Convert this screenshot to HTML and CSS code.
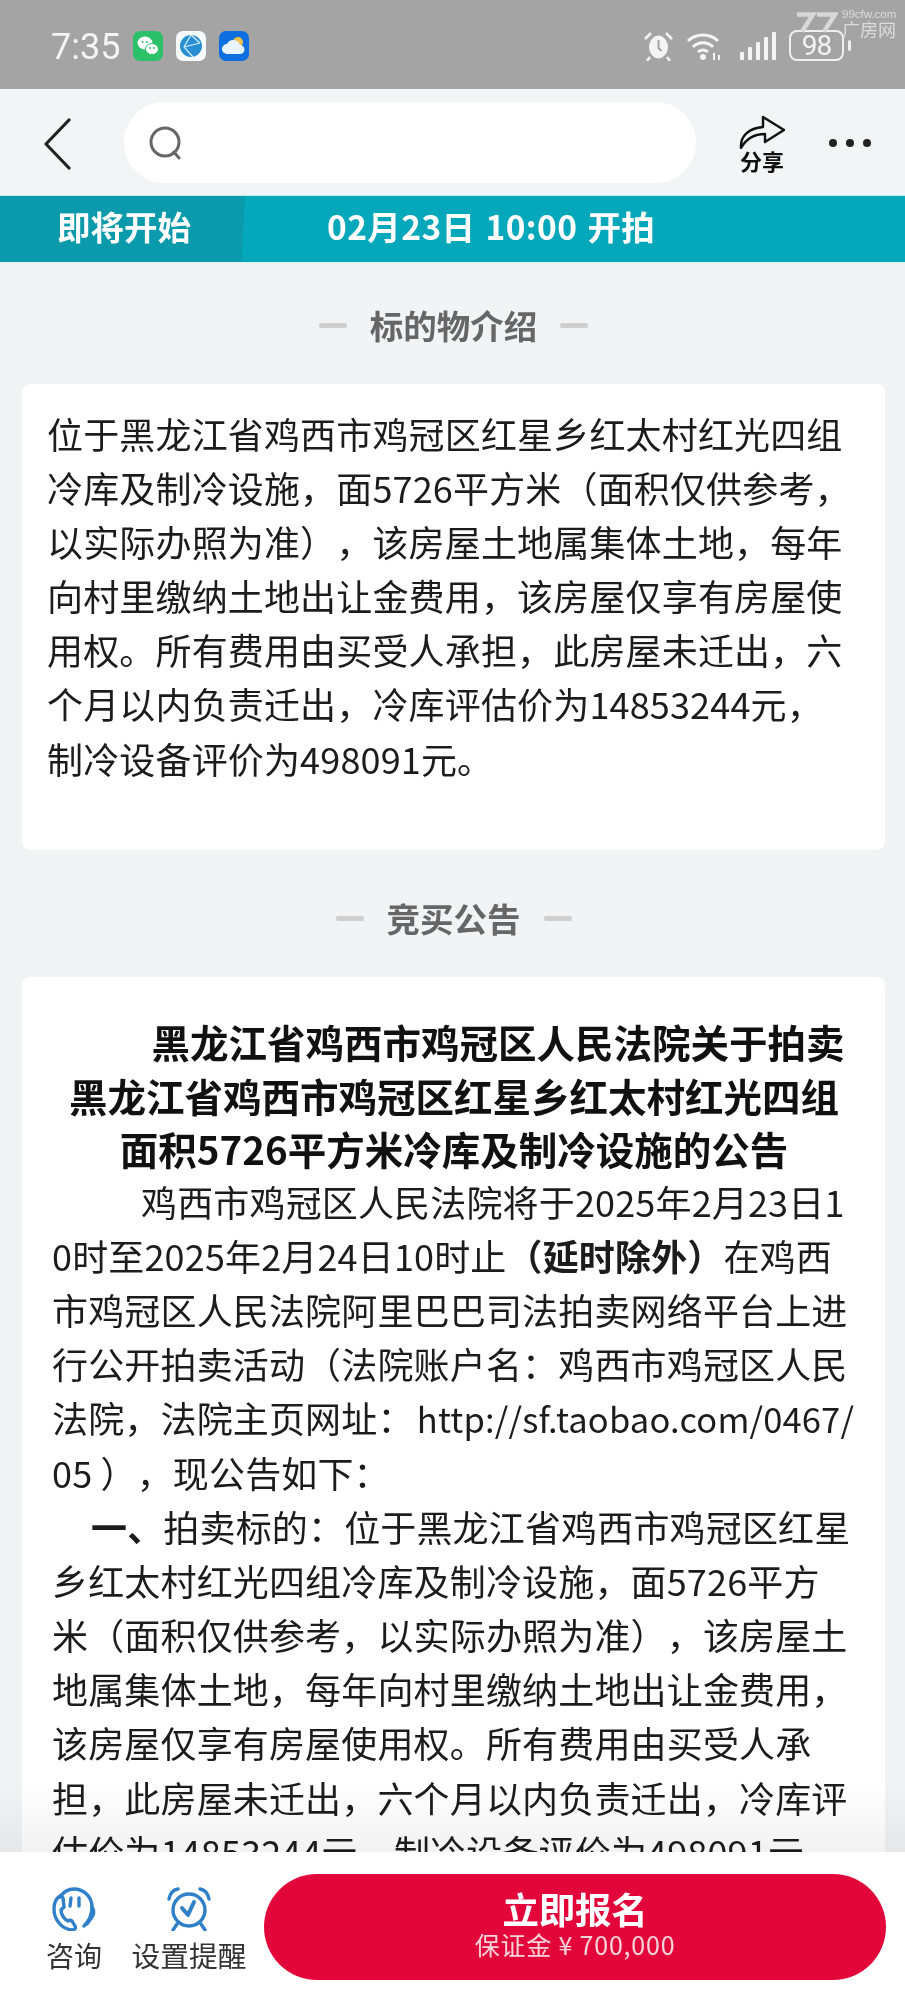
FILE: index.html
```html
<!DOCTYPE html>
<html lang="zh-CN">
<head>
<meta charset="utf-8">
<title>标的物介绍</title>
<link rel="stylesheet" href="styles.css">
</head>
<body>
<div class="page">
  <header class="status">
    <span class="time">7:35</span>
    <div class="apps">
      <svg class="app" viewBox="0 0 30 30"><rect width="30" height="30" rx="7" fill="#2bc16a"/><ellipse cx="12" cy="12" rx="7.500" ry="6.500" fill="#fff"/><ellipse cx="19" cy="18" rx="6.500" ry="5.500" fill="#fff" stroke="#2bc16a"/><circle cx="9.500" cy="11" r="1" fill="#2bc16a"/><circle cx="14" cy="11" r="1" fill="#2bc16a"/><circle cx="17" cy="17" r=".9" fill="#2bc16a"/><circle cx="21" cy="17" r=".9" fill="#2bc16a"/></svg>
      <svg class="app" viewBox="0 0 30 30"><rect width="30" height="30" rx="7" fill="#f7fafc"/><circle cx="15" cy="15" r="11" fill="#2a8fd2"/><path d="M15 4 L8 16 L17 26 M8 16 L24 12 M15 4 L24 12" fill="none" stroke="#d6eefa" stroke-width="1.200"/></svg>
      <svg class="app" viewBox="0 0 30 30"><rect width="30" height="30" rx="7" fill="#0e6fe0"/><circle cx="19" cy="11" r="5" fill="#f4c04e"/><path d="M8 23a5 5 0 0 1 0-10 7 7 0 0 1 13 1 4.500 4.500 0 0 1 0 9z" fill="#e8f4fb"/></svg>
    </div>
    <div class="sys">
      <svg class="alarm" viewBox="0 0 31 30" fill="none" stroke="#f4f4f4"><ellipse cx="15.500" cy="16" rx="9" ry="11" fill="#f4f4f4"/><path d="M15.500 9v8l3 3" stroke="#a3a3a3" stroke-width="2"/><path d="M2 8l6-6M29 8l-6-6M7 26l-3 4M24 26l3 4" stroke-width="2.500"/></svg>
      <svg class="wifi" viewBox="0 0 36 30" fill="none" stroke="#f4f4f4" stroke-width="3"><path d="M2 10a22 22 0 0 1 30 0M7 16a14 14 0 0 1 20 0M12 21a7 7 0 0 1 10 0"/><circle cx="17" cy="26" r="3" fill="#f4f4f4" stroke="none"/><path d="M28 22v7M33 24v5" stroke-width="2"/></svg>
      <svg class="signal" viewBox="0 0 36 30" fill="#f4f4f4"><rect x="0" y="21" width="4" height="8" rx="1"/><rect x="8" y="16" width="4" height="13" rx="1"/><rect x="16" y="11" width="4" height="18" rx="1"/><rect x="24" y="6" width="4" height="23" rx="1"/><rect x="32" y="1" width="4" height="28" rx="1"/></svg>
      <div class="battery"><span class="level">98</span><i class="cap"></i></div>
    </div>
    <div class="mark">
      <svg class="mark-logo" viewBox="0 0 42 20" fill="none" stroke="#d8d8d8" stroke-width="4.500"><path d="M1 2h16L6 19M21 2h18L28 19"/></svg>
      <div class="mark-text"><span class="mark-url">99cfw.com</span><span class="mark-name">广房网</span></div>
    </div>
  </header>

  <nav class="nav">
    <svg class="back" viewBox="0 0 28 52" fill="none" stroke="#222" stroke-width="3.200" stroke-linecap="round" stroke-linejoin="round"><path d="M26 2 L3 26 L26 50"/></svg>
    <div class="search">
      <svg class="search-icon" viewBox="0 0 34 34" fill="none" stroke="#666" stroke-width="3"><circle cx="16" cy="16" r="14"/><path d="M25 26l5 6" stroke-linecap="round"/></svg>
    </div>
    <div class="share">
      <svg class="share-icon" viewBox="0 0 46 34" fill="none" stroke="#111" stroke-width="2.400" stroke-linejoin="round" stroke-linecap="round"><path d="M2 33C1 21 10 13 24 12V2L45 15 26 27V19C15 19 7 24 2 33Z"/></svg>
      <span class="share-label">分享</span>
    </div>
    <div class="more"><i></i><i></i><i></i></div>
  </nav>

  <div class="banner">
    <div class="banner-state">即将开始</div>
    <div class="banner-date">02月23日 10:00 开拍</div>
  </div>

  <main class="content">
    <h2 class="section-title">标的物介绍</h2>
    <section class="card card-intro">
      <p class="text">位于黑龙江省鸡西市鸡冠区红星乡红太村红光四组<br>冷库及制冷设施，面5726平方米（面积仅供参考，<br>以实际办照为准），该房屋土地属集体土地，每年<br>向村里缴纳土地出让金费用，该房屋仅享有房屋使<br>用权。所有费用由买受人承担，此房屋未迁出，六<br>个月以内负责迁出，冷库评估价为14853244元，<br>制冷设备评价为498091元。</p>
    </section>

    <h2 class="section-title section-title-second">竞买公告</h2>
    <section class="card card-notice">
      <h3 class="notice-title"><span class="first">黑龙江省鸡西市鸡冠区人民法院关于拍卖</span><br>黑龙江省鸡西市鸡冠区红星乡红太村红光四组<br>面积5726平方米冷库及制冷设施的公告</h3>
      <p class="text notice-body"><span class="indent-a"></span>鸡西市鸡冠区人民法院将于2025年2月23日1<br>0时至2025年2月24日10时止<b>（延时除外）</b>在鸡西<br>市鸡冠区人民法院阿里巴巴司法拍卖网络平台上进<br>行公开拍卖活动（法院账户名：鸡西市鸡冠区人民<br>法院，法院主页网址： <span class="url">http://sf.taobao.com/0467/</span><br>05 ），现公告如下：<br><span class="indent-b"></span><b>一、</b>拍卖标的：位于黑龙江省鸡西市鸡冠区红星<br>乡红太村红光四组冷库及制冷设施，面5726平方<br>米（面积仅供参考，以实际办照为准），该房屋土<br>地属集体土地，每年向村里缴纳土地出让金费用，<br>该房屋仅享有房屋使用权。所有费用由买受人承<br>担，此房屋未迁出，六个月以内负责迁出，冷库评<br>估价为14853244元，制冷设备评价为498091元</p>
    </section>
  </main>

  <footer class="actions">
    <div class="action action-ask">
      <svg class="action-icon" viewBox="0 0 44 44" fill="none" stroke="#2f80c8" stroke-width="3.400" stroke-linecap="round" stroke-linejoin="round"><path d="M8 10C12 4 17 2 22 2c10 0 18 8 18 18 0 8-3 14-8 19"/><path d="M8 9C3 12 2 18 2 22c0 11 8 20 18 21 3 0 4-2 3-4l-3-5c-1-1-3-1-4 0-3-1-7-6-7-11l3-3-1-9c-1-2-2-3-3-2z"/><path d="M19 11l-1 8M27 11v8"/><path d="M40 20c2 3 2 7 0 10l-5 7"/></svg>
      <span class="action-label">咨询</span>
    </div>
    <div class="action action-remind">
      <svg class="action-icon" viewBox="0 0 44 44" fill="none" stroke="#2f80c8" stroke-width="3.400" stroke-linecap="round" stroke-linejoin="round"><circle cx="22" cy="23" r="16"/><path d="M2 12C3 6 6 3 11 2M42 12C41 6 38 3 33 2M10 37l-4 6M34 37l4 6"/><path d="M15 21l6 7 6-13" stroke-width="4"/></svg>
      <span class="action-label action-label-wide">设置提醒</span>
    </div>
    <button class="signup">
      <span class="signup-main">立即报名</span>
      <span class="signup-sub">保证金 ¥ 700,000</span>
    </button>
  </footer>
</div>
</body>
</html>
```
FILE: styles.css
```css
* { box-sizing: border-box; }
html, body { margin: 0; padding: 0; }
body {
  font-family: "Noto Sans CJK SC", "Noto Sans", sans-serif;
  color: #1c1c1c;
  background: #f2f3f5;
  text-spacing-trim: space-all;
}
.page { position: relative; width: 905px; height: 2000px; overflow: hidden; background: #f2f3f5; filter: blur(.4px); }

/* status bar */
.status {
  position: relative;
  height: 89px;
  background: #a4a4a4;
  display: flex;
  align-items: flex-start;
  padding: 28px 0 0 51px;
  color: #f4f4f4;
}
.time { font-family: Roboto, sans-serif; font-size: 36px; line-height: 38px; width: 82px; }
.apps { display: flex; gap: 13px; padding-top: 3px; }
.app { width: 30px; height: 30px; display: block; }
.sys { position: absolute; left: 643px; top: 30px; display: flex; align-items: center; }
.alarm { width: 31px; height: 30px; margin-right: 12px; }
.wifi { width: 36px; height: 30px; margin-right: 18px; }
.signal { width: 36px; height: 30px; margin-right: 13px; }
.battery { position: relative; width: 55px; height: 31px; border: 2px solid #f0f0f0; border-radius: 8px; display: flex; align-items: center; justify-content: center; }
.level { font-family: Roboto, sans-serif; font-size: 28px; line-height: 27px; letter-spacing: -1px; }
.cap { position: absolute; right: -9px; top: 8px; width: 3px; height: 11px; background: #f0f0f0; border-radius: 2px; }
.mark { position: absolute; left: 796px; top: 8px; display: flex; gap: 4px; }
.mark-logo { width: 42px; height: 21px; margin-top: 4px; }
.mark-text { display: flex; flex-direction: column; color: #dcdcdc; }
.mark-url { font-family: "Liberation Sans", sans-serif; font-size: 11.500px; line-height: 12px; }
.mark-name { font-size: 18px; line-height: 18px; }

/* nav */
.nav { position: relative; height: 106px; background: #f3f4f5; padding: 13px 0 0 43px; display: flex; align-items: flex-start; }
.back { width: 28px; height: 52px; margin-top: 16px; }
.search { width: 572px; height: 81px; margin-left: 53px; background: #fff; border-radius: 40px; display: flex; align-items: center; padding-left: 25px; }
.search-icon { width: 34px; height: 34px; }
.share { width: 46px; margin: 13px 0 0 43px; display: flex; flex-direction: column; align-items: center; }
.share-icon { width: 46px; height: 34px; display: block; }
.share-label { font-size: 22px; line-height: 22px; font-weight: 700; color: #111; white-space: nowrap; }
.more { position: absolute; left: 829px; top: 50px; display: flex; gap: 9px; }
.more i { display: block; width: 8px; height: 8px; border-radius: 50%; background: #222; }

/* banner */
.banner {
  height: 68px;
  display: flex;
  align-items: flex-start;
  color: #fff;
  font-weight: 700;
  font-size: 33.500px;
  background: #05a7ba;
  border-top: 1px solid #bfeef0;
  border-bottom: 1px solid #d8f3f5;
}
.banner-state {
  width: 245px;
  height: 100%;
  padding-left: 57px;
  line-height: 59px;
  background: #0a9aab;
  clip-path: polygon(0 0, 100% 0, 98.500% 100%, 0 100%);
}
.banner-date { margin-left: 82px; line-height: 59px; white-space: nowrap; word-spacing: 2px; letter-spacing: .4px; }

/* content */
.content { padding: 38px 20px 0 22px; }
.section-title {
  margin: 0;
  height: 48px;
  display: flex;
  justify-content: center;
  align-items: center;
  gap: 23px;
  font-size: 33.500px;
  line-height: 48px;
  font-weight: 700;
  color: #666;
}
.section-title::before, .section-title::after {
  content: "";
  width: 28px;
  height: 5px;
  background: #cfcfcf;
  border-radius: 2px;
}
.section-title-second { margin-top: 44px; }
.card { background: #fff; border-radius: 8px; }
.card-intro { margin-top: 35px; height: 466px; padding: 22px 0 0 25px; }
.card-notice { margin-top: 35px; height: 1000px; padding: 38px 0 0 0; }
.text { margin: 0; font-size: 36px; line-height: 54.100px; white-space: nowrap; color: #1c1c1c; letter-spacing: .16px; }
.text b { font-weight: 700; }
.notice-title { margin: 0; font-size: 38.500px; line-height: 53.500px; font-weight: 700; text-align: center; white-space: nowrap; color: #111; width: 864px; }
.first { padding-left: 88px; }
.notice-body { padding-left: 30px; margin-top: -2px; }
.url { font-size: 34.500px; margin-left: -5px; }
.indent-a { display: inline-block; width: 89px; }
.indent-b { display: inline-block; width: 39px; }

/* bottom actions */
.actions {
  position: absolute;
  left: 0;
  right: 0;
  bottom: 0;
  height: 148px;
  background: #fff;
  display: flex;
  align-items: flex-start;
  padding: 22px 19px 0 47px;
}
.actions::before {
  content: "";
  position: absolute;
  left: 0;
  right: 0;
  top: -70px;
  height: 70px;
  background: linear-gradient(rgba(0,0,0,0), rgba(0,0,0,.05));
}
.action { display: flex; flex-direction: column; align-items: center; }
.action-icon { width: 44px; height: 44px; margin-top: 13px; display: block; }
.action-label { font-size: 28px; line-height: 40px; margin-top: 4px; color: #333; white-space: nowrap; }
.action-label-wide { font-size: 28.750px; }
.action-ask { width: 54px; }
.action-remind { width: 112px; margin-left: 32px; }
.signup {
  margin-left: 19px;
  width: 622px;
  height: 106px;
  border: 0;
  border-radius: 53px;
  background: #e3063a;
  color: #fff;
  font-family: inherit;
  display: flex;
  flex-direction: column;
  align-items: center;
  padding: 13px 0 0;
}
.signup-main { font-size: 36.500px; line-height: 44px; font-weight: 700; letter-spacing: -.2px; }
.signup-sub { font-size: 25px; line-height: 26px; letter-spacing: .8px; color: #f8d3da; }
```
